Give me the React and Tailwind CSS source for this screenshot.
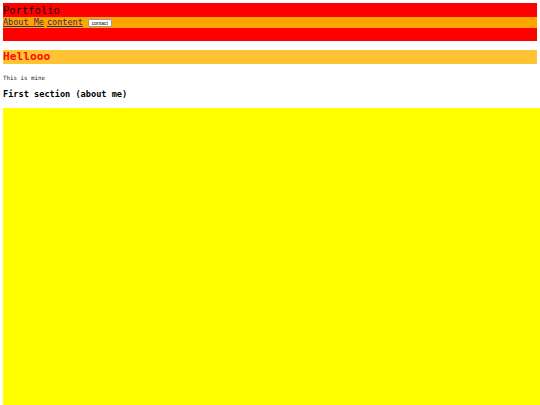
const App = () => {
  return (
    <div className="min-h-[405px] bg-white pl-[3px] pt-[3px] overflow-hidden" style={{ fontFamily: "'DejaVu Sans Mono', monospace" }}>
      <header className="w-[534px] bg-[#ff0000] h-[38px]">
        <div className="h-[14px] leading-[14px] text-[10.5px] text-[#1a0000]">Portfolio</div>
        <nav className="h-[11px] bg-[#ffa500] flex items-center gap-[3px] text-[8.5px] leading-[11px]">
          <a href="#about" className="underline text-[#3a2a6a]">About Me</a>
          <a href="#content" className="underline text-[#3a2a6a]">content</a>
          <button
            className="ml-[2px] h-[8px] px-[3px] bg-white border border-[#9a9a9a] rounded-[1px] text-[5px] leading-[6px] text-black"
            style={{ fontFamily: "'Liberation Sans', Arial, sans-serif" }}
          >
            contact
          </button>
        </nav>
      </header>
      <h1 className="mt-[9px] w-[534px] h-[14px] bg-[#ffc433] text-[#ff0a00] font-bold text-[11.2px] leading-[14px]">
        Hellooo
      </h1>
      <p className="mt-[10px] text-[5.8px] leading-[8px] text-[#222]">This is mine</p>
      <h2 className="mt-[7px] font-bold text-[8.6px] leading-[11px] text-black">First section (about me)</h2>
      <section className="mt-[8px] w-[540px] h-[300px] bg-[#ffff00]"></section>
    </div>
  )
}

export default App
